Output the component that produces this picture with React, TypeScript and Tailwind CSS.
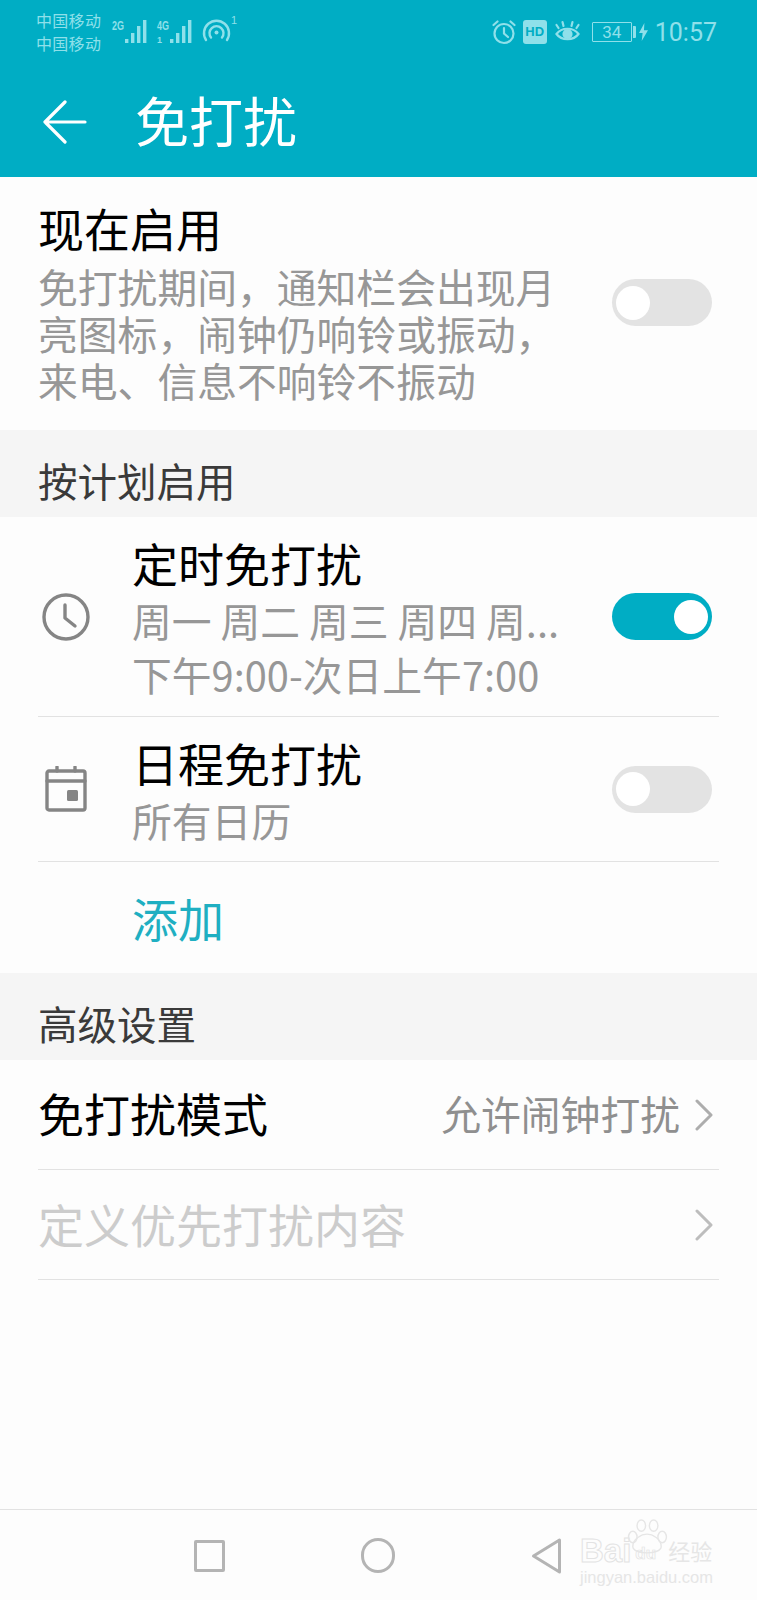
/**
 * Do-not-disturb settings screen (Android / EMUI style).
 */

import React from "react";

const FONT = "font-['Noto_Sans_CJK_SC','Liberation_Sans',sans-serif]";

function SignalBars({ x = 0 }: { x?: number }) {
  const heights = [4, 10, 17, 23];
  return (
    <g>
      {heights.map((h, i) => (
        <rect key={i} x={x + i * 6} y={31 - h} width="3.400" height={h} fill="currentColor" />
      ))}
    </g>
  );
}

function StatusLeft() {
  return (
    <div className="flex items-start text-[#8fe0ea]">
      <div className="ml-[36px] mt-[9px] flex w-[66px] flex-col text-[16px] leading-[23px] tracking-[0.3px]">
        <span>中国移动</span>
        <span>中国移动</span>
      </div>
      <svg className="ml-[8px] mt-[12px]" width="128" height="34" viewBox="0 0 128 34" fill="none">
        <text x="2" y="18" fontSize="13" fontWeight="700" fill="currentColor" fontFamily="Liberation Sans" textLength="12" lengthAdjust="spacingAndGlyphs">2G</text>
        <SignalBars x={15} />
        <text x="47" y="18" fontSize="13" fontWeight="700" fill="currentColor" fontFamily="Liberation Sans" textLength="12" lengthAdjust="spacingAndGlyphs">4G</text>
        <text x="47" y="31" fontSize="9" fontWeight="700" fill="currentColor" fontFamily="Liberation Sans">1</text>
        <SignalBars x={60} />
        <g stroke="currentColor" strokeWidth="2.400" strokeLinecap="round">
          <path d="M96 28a12.500 12.500 0 1 1 21 0" />
          <path d="M101 25.500a7 7 0 1 1 11 0" />
        </g>
        <circle cx="106.500" cy="20.500" r="2" fill="currentColor" />
        <text x="121" y="12" fontSize="11" fill="currentColor" fontFamily="Liberation Sans">1</text>
      </svg>
    </div>
  );
}

function StatusRight() {
  return (
    <div className="mr-[40px] mt-[19px] flex items-center text-[#8fe0ea]">
      <svg width="26" height="26" viewBox="0 0 26 26" fill="none" stroke="currentColor" strokeWidth="2.200" strokeLinecap="round">
        <circle cx="13" cy="14.500" r="9.500" />
        <path d="M13 9v5.500l4 3.500M2.500 6l4-3.500M23.500 6l-4-3.500" />
      </svg>
      <span className="ml-[6px] flex h-[24px] w-[24px] items-center justify-center rounded-[3px] bg-[#8fe0ea] font-['Liberation_Sans',sans-serif] text-[13px] font-bold text-[#00adc4]">
        HD
      </span>
      <svg className="ml-[7px]" width="27" height="24" viewBox="0 0 26 24" fill="none" stroke="currentColor" strokeWidth="2.200" strokeLinecap="round">
        <path d="M2 14c5-7 17-7 22 0-5 7-17 7-22 0z" />
        <circle cx="13" cy="14" r="4" fill="currentColor" />
        <path d="M4 8L2 5M9 6L8 2M17 6l1-4M22 8l2-3" />
      </svg>
      <span className="ml-[11px] flex h-[20px] w-[40px] items-center justify-center rounded-[1px] border border-[#8fe0ea] font-['Roboto',sans-serif] text-[17px] leading-none">
        34
      </span>
      <span className="ml-[1px] h-[12px] w-[3px] rounded-r-[1px] bg-[#8fe0ea]" />
      <svg className="ml-[3px]" width="9" height="20" viewBox="0 0 10 20" fill="currentColor">
        <path d="M6 0L0 11h4l-1 9 7-12H5.500z" />
      </svg>
      <span className="ml-[7px] font-['Roboto',sans-serif] text-[25px] leading-none">10:57</span>
    </div>
  );
}

function Toggle({ on }: { on: boolean }) {
  return (
    <div
      className={`flex h-[47px] w-[100px] shrink-0 items-center rounded-full px-[4px] ${
        on ? "justify-end bg-[#00adc4]" : "justify-start bg-[#e3e3e3]"
      }`}
    >
      <div className="h-[34px] w-[34px] rounded-full bg-white" />
    </div>
  );
}

function SectionTitle({ children }: { children: React.ReactNode }) {
  return (
    <div className="flex h-[87px] items-end bg-[#f5f5f5] pb-[10px] pl-[38px] text-[39.500px] leading-[54px] text-[#3a3a3a]">
      {children}
    </div>
  );
}

function Chevron({ light }: { light?: boolean }) {
  return (
    <svg
      className={light ? "text-[#bdbdbd]" : "text-[#adadad]"}
      width="20"
      height="32"
      viewBox="0 0 20 32"
      fill="none"
      stroke="currentColor"
      strokeWidth="3"
      strokeLinecap="round"
      strokeLinejoin="round"
    >
      <path d="M3 2l14 14L3 30" />
    </svg>
  );
}

export default function App() {
  return (
    <div className={`flex h-[1600px] w-[757px] flex-col overflow-hidden bg-[#fdfdfd] ${FONT}`}>
      {/* Status bar + title */}
      <header className="h-[177px] shrink-0 bg-[#00adc4]">
        <div className="flex h-[62px] items-start justify-between">
          <StatusLeft />
          <StatusRight />
        </div>
        <div className="flex h-[115px] items-start text-white">
          <svg className="ml-[43px] mt-[38px]" width="44" height="44" viewBox="0 0 44 44" fill="none" stroke="currentColor" strokeWidth="3.200" strokeLinecap="round" strokeLinejoin="round">
            <path d="M22 2L2 22l20 20M2 22h40" />
          </svg>
          <h1 className="ml-[48px] mt-[22px] text-[54px] font-normal leading-[72px]">免打扰</h1>
        </div>
      </header>

      {/* Enable now */}
      <section className="flex h-[253px] shrink-0 items-start justify-between pl-[38px] pr-[45px]">
        <div className="pt-[19px]">
          <div className="text-[46px] leading-[62px] text-black">现在启用</div>
          <div className="mt-[4px] w-[530px] text-[39.800px] leading-[47px] text-[#979797]">
            免打扰期间，通知栏会出现月亮图标，闹钟仍响铃或振动，来电、信息不响铃不振动
          </div>
        </div>
        <div className="mt-[102px]">
          <Toggle on={false} />
        </div>
      </section>

      <SectionTitle>按计划启用</SectionTitle>

      {/* Schedule rows */}
      <section className="flex h-[199px] shrink-0 items-center justify-between pl-[38px] pr-[45px]">
        <div className="flex items-center">
          <svg className="ml-[4px]" width="48" height="48" viewBox="0 0 48 48" fill="none" stroke="#858585" strokeWidth="3.400" strokeLinecap="round" strokeLinejoin="round">
            <circle cx="24" cy="24" r="22" />
            <path d="M23 12v13l10 8" />
          </svg>
          <div className="ml-[42px] pb-[2px]">
            <div className="text-[46px] leading-[56px] text-black">定时免打扰</div>
            <div className="whitespace-nowrap text-[39.800px] leading-[60px] text-[#979797]">周一 周二 周三 周四 周...</div>
            <div className="text-[39.800px] leading-[48px] text-[#979797]">下午9:00-次日上午7:00</div>
          </div>
        </div>
        <Toggle on />
      </section>
      <div className="mx-[38px] h-px shrink-0 bg-[#e2e2e2]" />
      <section className="flex h-[144px] shrink-0 items-center justify-between pl-[38px] pr-[45px]">
        <div className="flex items-center">
          <svg className="ml-[7px]" width="42" height="46" viewBox="0 0 42 46" fill="none" stroke="#858585" strokeWidth="3.400" strokeLinecap="round" strokeLinejoin="round">
            <rect x="2" y="5" width="38" height="39" rx="2" />
            <path d="M2 15h38M12 1v4M30 1v4" />
            <rect x="22" y="24" width="11" height="11" rx="1.500" fill="#858585" stroke="none" />
          </svg>
          <div className="ml-[45px]">
            <div className="text-[46px] leading-[62px] text-black">日程免打扰</div>
            <div className="text-[39.800px] leading-[54px] text-[#979797]">所有日历</div>
          </div>
        </div>
        <Toggle on={false} />
      </section>
      <div className="mx-[38px] h-px shrink-0 bg-[#e2e2e2]" />
      <section className="flex h-[111px] shrink-0 items-center pl-[132px] text-[46px] text-[#1fafc2]">添加</section>

      <SectionTitle>高级设置</SectionTitle>

      {/* Advanced rows */}
      <section className="flex h-[109px] shrink-0 items-center justify-between pl-[38px] pr-[43px]">
        <span className="pb-[4px] text-[46px] text-black">免打扰模式</span>
        <div className="flex items-center gap-[14px]">
          <span className="pb-[4px] text-[39.800px] text-[#8f8f8f]">允许闹钟打扰</span>
          <Chevron />
        </div>
      </section>
      <div className="mx-[38px] h-px shrink-0 bg-[#e2e2e2]" />
      <section className="flex h-[109px] shrink-0 items-center justify-between pl-[38px] pr-[43px]">
        <span className="pb-[2px] text-[46px] text-[#cccccc]">定义优先打扰内容</span>
        <Chevron light />
      </section>
      <div className="mx-[38px] h-px shrink-0 bg-[#e2e2e2]" />

      <div className="flex-1" />

      {/* Nav bar */}
      <nav className="relative flex h-[91px] shrink-0 items-center border-t border-[#e2e2e2] pt-[1px] text-[#b4b4b4]">
        <div className="ml-[194px] h-[32px] w-[31px] rounded-[2px] border-[3px] border-[#b4b4b4]" />
        <div className="ml-[136px] h-[35px] w-[34px] rounded-full border-[3px] border-[#b4b4b4]" />
        <svg className="ml-[135px]" width="33" height="38" viewBox="0 0 32 38" fill="none" stroke="currentColor" strokeWidth="3" strokeLinejoin="round">
          <path d="M29 3v32L3 19z" />
        </svg>
        {/* Baidu watermark */}
        <div className="absolute left-[580px] top-[9px] w-[138px] font-['Liberation_Sans',sans-serif] text-[#e6e6e6]">
          <svg className="absolute left-[46px] top-0" width="42" height="36" viewBox="0 0 44 38" fill="none" stroke="currentColor" strokeWidth="1.500">
            <ellipse cx="7" cy="19" rx="4.500" ry="6" />
            <ellipse cx="16" cy="7" rx="4.500" ry="6" />
            <ellipse cx="29" cy="7" rx="4.500" ry="6" />
            <ellipse cx="38" cy="19" rx="4.500" ry="6" />
            <path d="M7 29c0-8 9-13 15-13s15 5 15 13c0 9-30 9-30 0z" />
          </svg>
          <div className="flex items-end pt-[17px]">
            <span className="text-[33px] font-bold leading-[30px] text-transparent [-webkit-text-stroke:1px_#e3e3e3]">Bai</span>
            <span className="ml-[4px] text-[17px] font-bold leading-[24px] text-transparent [-webkit-text-stroke:0.7px_#e3e3e3]">du</span>
            <span className={`mb-[3px] ml-[12px] text-[22px] leading-[26px] ${FONT}`}>经验</span>
          </div>
          <div className="mt-[3px] whitespace-nowrap text-[16.500px] leading-[16px]">jingyan.baidu.com</div>
        </div>
      </nav>
    </div>
  );
}
